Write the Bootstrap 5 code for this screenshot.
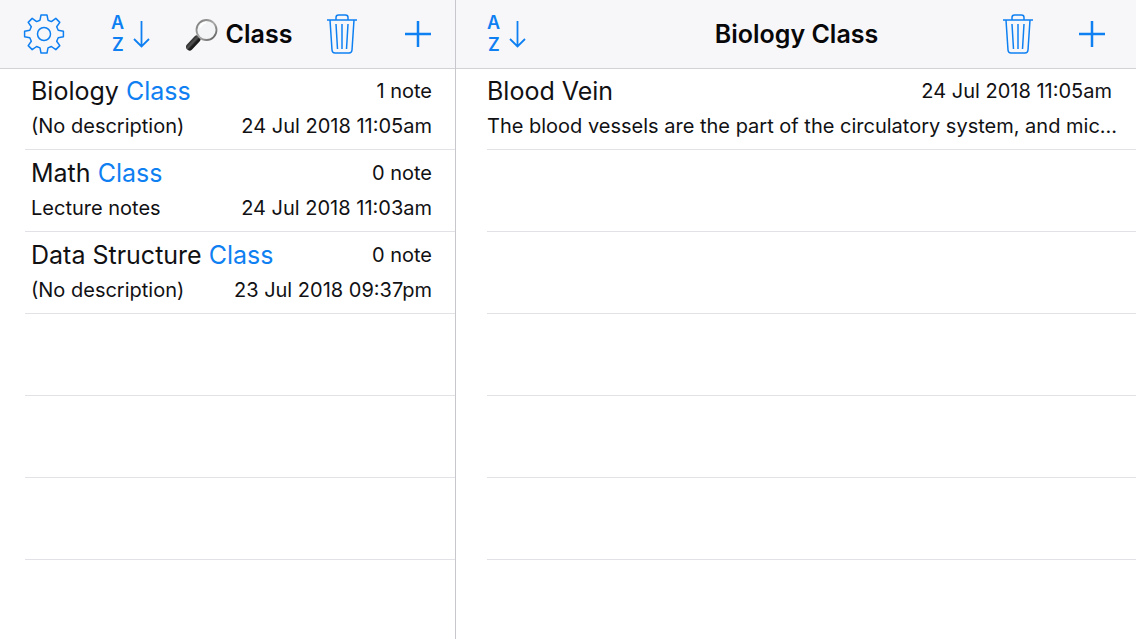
<!DOCTYPE html>
<html lang="en">
<head>
<meta charset="utf-8">
<meta name="viewport" content="width=device-width, initial-scale=1">
<title>Notes</title>
<link rel="stylesheet" href="https://cdn.jsdelivr.net/npm/bootstrap@5.3.0/dist/css/bootstrap.min.css">
<style>
  :root { --tint: #0f80f2; --line: #e2e1e5; --edge: #c8c7cc; }
  body { font-family: Inter, "Liberation Sans", sans-serif; color: #111114; background: #fff; }
  .split { display: grid; grid-template-columns: 57fr 85fr; }
  .pane { min-width: 0; }
  .pane-side { border-right: 1px solid var(--edge); }
  .bar { height: 68px; background: #f7f7f9; box-shadow: 0 1px 0 #d2d2d6; }
  .bar-side { padding: 0 23px 0 24px; }
  .bar-tools { gap: 35px; }
  .bar-main { display: grid; grid-template-columns: 1fr auto 1fr; padding: 0 30px 0 31px; }
  .bar-title { font-size: 25px; line-height: 32px; font-weight: 600; color: #08080a; white-space: nowrap; }
  .tool { color: var(--tint); line-height: 0; }
  .tool svg { fill: none; stroke: currentColor; overflow: visible; }
  .tool text { fill: currentColor; stroke: none; font: 600 18px Inter, "Liberation Sans", sans-serif; }
  .tool-end { gap: 45px; }
  .rows-side { margin-left: 25px; }
  .rows-main { margin-left: 31px; }
  .note-row { height: 82px; border-bottom: 1px solid var(--line); padding: 6px 23px 0 6px; }
  .rows-main .note-row { padding-left: 0; padding-right: 24px; }
  .row-line { height: 35px; line-height: 35px; font-size: 20px; }
  .row-name { font-size: 25px; font-weight: 400; line-height: 35px; }
  .row-name a { color: inherit; }
  .hit { color: var(--tint); }
</style>
</head>
<body>
<div class="split min-vh-100">
  <section class="pane pane-side">
    <header class="bar bar-side d-flex align-items-center justify-content-between">
      <button type="button" class="tool btn border-0 p-0" aria-label="Settings">
        <svg width="40" height="40" viewBox="0 0 40 40" stroke-width="1.5" stroke-linejoin="round">
          <path d="M17 1h6l1 5.200 3.400 1.400 4.400-3.200 4 4-3.100 4.400 1.500 3.500 5.200 1v5.400l-5.200 1-1.500 3.500 3.100 4.400-4 4-4.400-3.100-3.400 1.400-1 5.200h-6l-1-5.200-3.400-1.400-4.400 3.100-4-4 3.100-4.400-1.500-3.500-5.200-1v-5.400l5.200-1 1.500-3.500-3.100-4.400 4-4 4.400 3.200 3.400-1.400z"/>
          <circle cx="20" cy="20" r="6.500"/>
        </svg>
      </button>
      <div class="bar-tools d-flex align-items-center">
        <button type="button" class="tool btn border-0 p-0" aria-label="Sort">
          <svg width="40" height="40" viewBox="0 0 40 40" stroke-width="1.800"><text x="0" y="15">A</text><text x="1" y="37">Z</text><path d="M30.500 7v25M23 25l7.500 7.500L38 25"/></svg>
        </button>
        <h1 class="bar-title m-0 d-flex align-items-center gap-2">
          <svg width="32" height="34" viewBox="0 0 32 34" aria-hidden="true">
            <defs>
              <linearGradient id="rim" x1="0" y1="0" x2="1" y2="1"><stop offset="0" stop-color="#777"/><stop offset=".5" stop-color="#aaa"/><stop offset="1" stop-color="#555"/></linearGradient>
              <linearGradient id="grip" x1="0" y1="0" x2="1" y2="1"><stop offset="0" stop-color="#111"/><stop offset=".45" stop-color="#555"/><stop offset=".6" stop-color="#222"/><stop offset="1" stop-color="#080808"/></linearGradient>
            </defs>
            <path d="M10 23l4-4" stroke="#777" stroke-width="3"/>
            <path d="M3.500 30l7.500-8" stroke="url(#grip)" stroke-width="7" stroke-linecap="round"/>
            <circle cx="20.500" cy="13" r="10" fill="#f2f4f5" stroke="url(#rim)" stroke-width="1.800"/>
            <path d="M14 10.500a7.500 7.500 0 0 1 6-5" fill="none" stroke="#fff" stroke-width="2"/>
          </svg>
          <span>Class</span>
        </h1>
        <button type="button" class="tool btn border-0 p-0" aria-label="Delete">
          <svg width="30" height="40" viewBox="0 0 30 40" stroke-width="1.500"><path d="M0 6h30M9 6V3.500Q9 1 11.500 1h7Q21 1 21 3.500V6M3 6l2 30q.2 3 3 3h14q2.800 0 3-3l2-30M9 10l1.500 25M15 10v25M21 10l-1.500 25"/></svg>
        </button>
      </div>
      <button type="button" class="tool btn border-0 p-0" aria-label="Add folder">
        <svg width="28" height="28" viewBox="0 0 28 28" stroke-width="2.500"><path d="M14 1v26M1 14h26"/></svg>
      </button>
    </header>
    <ul class="rows-side list-unstyled mb-0">
      <li class="note-row">
        <div class="row-line d-flex justify-content-between"><h2 class="row-name m-0"><a href="#biology" class="text-decoration-none">Biology <span class="hit">Class</span></a></h2><span>1 note</span></div>
        <div class="row-line d-flex justify-content-between"><span>(No description)</span><time>24 Jul 2018 11:05am</time></div>
      </li>
      <li class="note-row">
        <div class="row-line d-flex justify-content-between"><h2 class="row-name m-0"><a href="#math" class="text-decoration-none">Math <span class="hit">Class</span></a></h2><span>0 note</span></div>
        <div class="row-line d-flex justify-content-between"><span>Lecture notes</span><time>24 Jul 2018 11:03am</time></div>
      </li>
      <li class="note-row">
        <div class="row-line d-flex justify-content-between"><h2 class="row-name m-0"><a href="#data" class="text-decoration-none">Data Structure <span class="hit">Class</span></a></h2><span>0 note</span></div>
        <div class="row-line d-flex justify-content-between"><span>(No description)</span><time>23 Jul 2018 09:37pm</time></div>
      </li>
      <li class="note-row"></li>
      <li class="note-row"></li>
      <li class="note-row"></li>
    </ul>
  </section>
  <main class="pane">
    <header class="bar bar-main align-items-center">
      <button type="button" class="tool btn border-0 p-0 text-start" aria-label="Sort notes">
        <svg width="40" height="40" viewBox="0 0 40 40" stroke-width="1.800"><text x="0" y="15">A</text><text x="1" y="37">Z</text><path d="M30.500 7v25M23 25l7.500 7.500L38 25"/></svg>
      </button>
      <h1 class="bar-title m-0">Biology Class</h1>
      <div class="tool-end d-flex align-items-center justify-content-end">
        <button type="button" class="tool btn border-0 p-0" aria-label="Delete note">
          <svg width="30" height="40" viewBox="0 0 30 40" stroke-width="1.500"><path d="M0 6h30M9 6V3.500Q9 1 11.500 1h7Q21 1 21 3.500V6M3 6l2 30q.2 3 3 3h14q2.800 0 3-3l2-30M9 10l1.500 25M15 10v25M21 10l-1.500 25"/></svg>
        </button>
        <button type="button" class="tool btn border-0 p-0" aria-label="Add note">
          <svg width="28" height="28" viewBox="0 0 28 28" stroke-width="2.500"><path d="M14 1v26M1 14h26"/></svg>
        </button>
      </div>
    </header>
    <ul class="rows-main list-unstyled mb-0">
      <li class="note-row">
        <div class="row-line d-flex justify-content-between"><h2 class="row-name m-0"><a href="#vein" class="text-decoration-none">Blood Vein</a></h2><time>24 Jul 2018 11:05am</time></div>
        <p class="row-line text-nowrap m-0">The blood vessels are the part of the circulatory system, and mic...</p>
      </li>
      <li class="note-row"></li>
      <li class="note-row"></li>
      <li class="note-row"></li>
      <li class="note-row"></li>
      <li class="note-row"></li>
    </ul>
  </main>
</div>
<script src="https://cdn.jsdelivr.net/npm/bootstrap@5.3.0/dist/js/bootstrap.bundle.min.js"></script>
</body>
</html>
